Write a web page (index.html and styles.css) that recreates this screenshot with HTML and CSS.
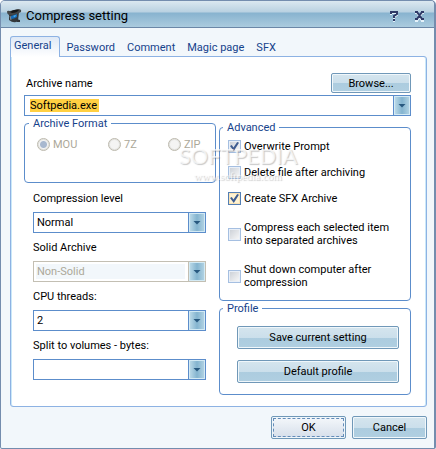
FILE: index.html
```
<!DOCTYPE html>
<html lang="en">

<head>
    <meta charset="UTF-8">
    <meta name="viewport" content="width=device-width, initial-scale=1.0">
    <title>Compress setting</title>
    <link rel="stylesheet" href="styles.css">
</head>

<body>
    <form class="window">
        <header class="titlebar">
            <svg class="logo" width="16" height="16" viewBox="0 0 16 16" aria-hidden="true">
                <path d="M3 6 L13 4 L12 13 Q8 16 3 12 Z" fill="#34383b" />
                <path d="M1 4 Q1 2 4 3 L12 1 Q16 1 15 4 Q9 8 3 7 Q1 6 1 4Z" fill="#424648" />
                <path d="M4 4 Q8 1 13 2 Q11 5 6 5Z" fill="#17191b" />
                <path d="M5 8 L11 6 L11 9 Q8 11 5 11Z" fill="#176bb8" />
                <path d="M7 8 L10 7 L9 9Z" fill="#56bdf4" />
                <path d="M4 8 L5 12" stroke="#858d91" fill="none" />
                <path d="M10 11 L14 12 L14 14 L11 14Z" fill="#303438" />
            </svg>
            <h1 class="title">Compress setting</h1>
            <button class="title-button" type="button" aria-label="Help">
                <svg width="11" height="12" viewBox="0 0 11 12">
                    <path d="M2 5V3H8V5L5 7V9M5 10V12" fill="none" stroke="#e5f2fa" stroke-width="2" />
                    <path d="M2 4V2H8V4L5 6V8M5 9V11" fill="none" stroke="#303b68" stroke-width="2" />
                </svg>
            </button>
            <button class="title-button" type="button" aria-label="Close">
                <svg width="11" height="12" viewBox="0 0 11 12">
                    <path d="M1 3H4M7 3H10M1 11H4M7 11H10M3 3L8 11M8 3L3 11" fill="none" stroke="#e5f2fa" stroke-width="2" />
                    <path d="M1 2H4M7 2H10M1 9H4M7 9H10M3 2L8 9M8 2L3 9" fill="none" stroke="#303b68" stroke-width="2" />
                </svg>
            </button>
        </header>

        <main class="content">
            <nav class="tabs">
                <a class="tab active" href="#general">General</a>
                <a class="tab" href="#password">Password</a>
                <a class="tab" href="#comment">Comment</a>
                <a class="tab" href="#magic">Magic page</a>
                <a class="tab" href="#sfx">SFX</a>
            </nav>

            <section class="panel" id="general">
                <div class="archive-row">
                    <label for="archive">Archive name</label>
                    <button class="button browse" type="button">Browse...</button>
                </div>
                <div class="combo archive-combo">
                    <input class="archive-name" id="archive" type="text" value="Softpedia.exe">
                    <button class="arrow" type="button" aria-label="Show archive names"></button>
                </div>

                <div class="columns">
                    <div class="column">
                        <fieldset class="group formats" disabled>
                            <legend>Archive Format</legend>
                            <div class="radios">
                                <label><input type="radio" name="format" checked>MOU</label>
                                <label><input type="radio" name="format">7Z</label>
                                <label><input type="radio" name="format">ZIP</label>
                            </div>
                        </fieldset>
                        <div class="field">
                            <label for="level">Compression level</label>
                            <div class="combo">
                                <select id="level"><option>Normal</option></select>
                                <span class="arrow"></span>
                            </div>
                        </div>
                        <div class="field">
                            <label for="solid">Solid Archive</label>
                            <div class="combo disabled">
                                <select id="solid" disabled><option>Non-Solid</option></select>
                                <span class="arrow"></span>
                            </div>
                        </div>
                        <div class="field">
                            <label for="threads">CPU threads:</label>
                            <div class="combo">
                                <select id="threads"><option>2</option></select>
                                <span class="arrow"></span>
                            </div>
                        </div>
                        <div class="field">
                            <label for="volumes">Split to volumes - bytes:</label>
                            <div class="combo">
                                <select id="volumes"><option></option></select>
                                <span class="arrow"></span>
                            </div>
                        </div>
                    </div>

                    <div class="column right">
                        <fieldset class="group advanced">
                            <legend>Advanced</legend>
                            <div class="checks">
                                <label class="check"><input type="checkbox" checked>Overwrite Prompt</label>
                                <label class="check"><input type="checkbox">Delete file after archiving</label>
                                <label class="check hot"><input type="checkbox" checked>Create SFX Archive</label>
                                <label class="check tall"><input type="checkbox"><span>Compress each selected item<br>into separated archives</span></label>
                                <label class="check tall"><input type="checkbox"><span>Shut down computer after<br>compression</span></label>
                            </div>
                        </fieldset>
                        <fieldset class="group profile">
                            <legend>Profile</legend>
                            <div class="profile-buttons">
                                <button class="button" type="button">Save current setting</button>
                                <button class="button" type="button">Default profile</button>
                            </div>
                        </fieldset>
                    </div>
                    <div class="watermark" aria-hidden="true">
                        <div class="brand">SOFTPEDIA</div>
                        <div class="site">www.softpedia.com</div>
                    </div>
                </div>
            </section>

            <footer class="actions">
                <button class="button ok" type="submit">OK</button>
                <button class="button" type="button">Cancel</button>
            </footer>
        </main>
    </form>
</body>

</html>
```
FILE: styles.css
```
* {
    box-sizing: border-box;
}

body {
    margin: 0;
    background: #fff;
    color: #000;
    font-family: Tahoma, Roboto, sans-serif;
    font-size: 11px;
    line-height: 13px;
}

button,
input,
select {
    margin: 0;
    color: inherit;
    font: inherit;
}

.window {
    display: flex;
    flex-direction: column;
    min-height: 100vh;
    border: 1px solid #748dae;
    border-right-width: 2px;
    border-radius: 5px 5px 2px 2px;
    background: #f2f7fb;
    overflow: hidden;
}

.titlebar {
    display: flex;
    align-items: center;
    height: 27px;
    padding: 3px 2px 0 5px;
    border-bottom: 1px solid #6b87a7;
    background: linear-gradient(#dbe8f0 0, #b9d1e1 11px, #88b3cf 12px, #abcbde 100%);
}

.title {
    flex: 1;
    margin: 0 0 0 4px;
    font-size: 13px;
    font-weight: 400;
    line-height: 16px;
}

.title-button {
    display: flex;
    justify-content: center;
    width: 25px;
    padding: 0;
    border: 0;
    background: none;
}

.content {
    display: flex;
    flex: 1;
    flex-direction: column;
    padding: 8px 7px 9px 9px;
}

.tabs {
    display: flex;
    align-items: flex-end;
}

.tab {
    padding: 3px 6px 1px;
    color: #15428b;
    line-height: 14px;
    text-decoration: none;
}

.tab.active {
    z-index: 1;
    margin-bottom: -1px;
    padding: 2px 8px 4px 3px;
    border: 1px solid #8db2e3;
    border-bottom: 0;
    border-radius: 3px 3px 0 0;
    background: linear-gradient(#dfe9f6, #fff);
}

.panel {
    flex: 1;
    padding: 16px 15px 10px 13px;
    border: 1px solid #8db2e3;
    border-radius: 0 3px 3px 3px;
    background: #fff;
    box-shadow: inset -1px 0 #cbe8f8, inset 1px 0 #cbe8f8;
}

.archive-row {
    display: flex;
    align-items: center;
    justify-content: space-between;
    padding-left: 2px;
}

.button {
    height: 23px;
    padding: 0;
    border: 1px solid #7098b8;
    border-radius: 2px;
    background: linear-gradient(#d5e5ee 0, #cbdfeb 50%, #acccdf 51%, #b0cfe1 100%);
    box-shadow: inset 0 0 0 1px #f0f7fb;
}

.browse {
    width: 80px;
    height: 20px;
}

.combo {
    display: grid;
    grid-template-columns: 1fr 16px;
    height: 21px;
    border: 1px solid #5c8dcb;
    background: #fff;
}

.archive-combo {
    align-items: center;
    margin-top: 2px;
}

.archive-name {
    width: 69px;
    height: 13px;
    margin-left: 5px;
    padding: 0;
    border: 0;
    background: #ffd042;
    outline: 0;
}

.combo select {
    grid-area: 1 / 1 / 2 / 3;
    width: 100%;
    padding: 0 20px 0 3px;
    border: 0;
    background: none;
    appearance: none;
}

.arrow {
    display: flex;
    grid-area: 1 / 2;
    align-items: center;
    justify-content: center;
    height: 19px;
    padding: 0;
    border: 1px solid #d3eaf4;
    outline: 1px solid #5c8dcb;
    background: linear-gradient(90deg, #b9d8e7, #84b4cf, #afd1e2);
    pointer-events: none;
}

.archive-combo .arrow {
    pointer-events: auto;
}

.arrow::after {
    width: 8px;
    height: 4px;
    background: #28597f;
    clip-path: polygon(0 0, 100% 0, 50% 100%);
    content: "";
}

.combo.disabled {
    border-color: #c3bfb3;
}

.disabled .arrow {
    outline-color: #c3bfb3;
}

.disabled select {
    margin: 2px;
    width: calc(100% - 22px);
    padding: 0 1px;
    background: #f2f7fb;
    color: #aca899;
    opacity: 1;
}

.columns {
    display: grid;
    position: relative;
    grid-template-columns: 1fr 1fr;
    gap: 3px;
    margin-top: 1px;
}

.column {
    min-width: 0;
}

.group {
    min-width: 0;
    margin: 0;
    padding: 0;
    border: 1px solid #5c8dcb;
    border-radius: 4px;
}

.group legend {
    margin-left: 4px;
    padding: 0 4px;
    color: #15428b;
}

.formats {
    height: 66px;
    margin-bottom: 9px;
}

.radios {
    display: grid;
    grid-template-columns: 71px 60px 1fr;
    padding: 8px 0 0 12px;
    color: #aca899;
}

.radios label {
    display: flex;
    align-items: center;
    gap: 3px;
}

.radios input {
    width: 13px;
    height: 13px;
    border: 1px solid #bcb9ad;
    border-radius: 50%;
    background: #f4f4f3;
    box-shadow: inset 0 0 0 1px #e2e2df;
    appearance: none;
}

.radios input:checked {
    background: radial-gradient(#a8b8cf 0 3px, #f4f4f3 4px);
}

.field {
    margin: 0 10px 8px 9px;
}

.field label {
    display: block;
    margin-bottom: 7px;
}

.right {
    padding-top: 4px;
}

.advanced {
    height: 180px;
}

.advanced legend,
.profile legend {
    margin-left: 3px;
}

.checks {
    display: grid;
    gap: 13px;
    padding: 6px 0 0 8px;
}

.check {
    display: flex;
    align-items: center;
    gap: 3px;
    white-space: nowrap;
}

.check.tall {
    padding-top: 3px;
}

.check input {
    display: flex;
    flex: none;
    align-items: center;
    justify-content: center;
    width: 13px;
    height: 13px;
    border: 1px solid #a5bfe1;
    background: linear-gradient(135deg, #c9ced5, #fafafa);
    box-shadow: inset 0 0 0 1px #e9eff7;
    appearance: none;
}

.check input:checked::before {
    width: 9px;
    height: 9px;
    background: #3e5c91;
    clip-path: polygon(0 44%, 20% 34%, 38% 60%, 80% 0, 100% 8%, 42% 100%);
    content: "";
}

.check.hot input {
    border-color: #537fb5;
    background: #fff3d2;
    box-shadow: inset 0 0 0 1px #fbe3b4;
}

.profile {
    height: 93px;
    margin-top: 1px;
}

.profile-buttons {
    display: grid;
    gap: 11px;
    padding: 11px 11px 0 17px;
}

.actions {
    display: flex;
    justify-content: flex-end;
    gap: 6px;
    margin-top: 9px;
}

.actions .button {
    width: 75px;
}

.button.ok {
    padding: 1px;
    background: linear-gradient(#f5f8fb, #d5deea);
    outline: 1px dashed #638cb9;
    outline-offset: -3px;
}

.watermark {
    position: absolute;
    top: 27px;
    left: 152px;
    width: 124px;
    color: rgba(255, 255, 255, 0.7);
    text-align: center;
    text-shadow: 1px 1px 1px rgba(100, 100, 100, 0.35);
    pointer-events: none;
}

.brand {
    font-family: Lato, sans-serif;
    font-size: 22px;
    line-height: 24px;
}

.site {
    font-family: "Liberation Serif", serif;
    font-size: 11px;
    line-height: 16px;
}
```
